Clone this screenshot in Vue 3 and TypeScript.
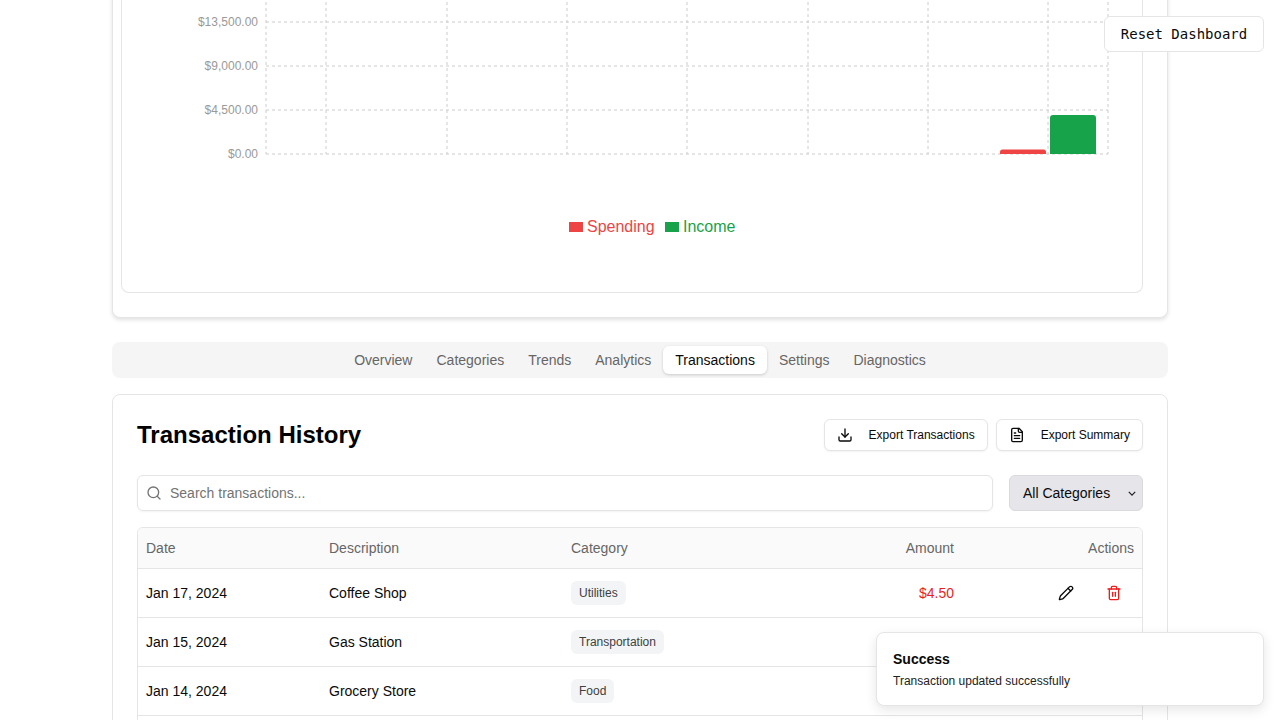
<script setup lang="ts">
interface Row {
  date: string
  description: string
  category: string
  amount?: string
}

const tabs = ['Overview', 'Categories', 'Trends', 'Analytics', 'Transactions', 'Settings', 'Diagnostics']

const rows: Row[] = [
  { date: 'Jan 17, 2024', description: 'Coffee Shop', category: 'Utilities', amount: '$4.50' },
  { date: 'Jan 15, 2024', description: 'Gas Station', category: 'Transportation' },
  { date: 'Jan 14, 2024', description: 'Grocery Store', category: 'Food' },
]

// chart coordinates are page coordinates, the viewBox lines them up
const gridX = [266, 326, 447, 567, 687, 808, 928, 1048, 1108]
const gridY = [22, 66, 110, 154]
const ticks = [
  { y: 22, label: '$13,500.00' },
  { y: 66, label: '$9,000.00' },
  { y: 110, label: '$4,500.00' },
  { y: 154, label: '$0.00' },
]
</script>

<template>
  <div class="viewport">
    <div class="page">
      <section class="chart-card">
        <div class="chart-inner">
          <svg class="chart" width="1020" height="332" viewBox="122 -40 1020 332">
            <line v-for="x in gridX" :key="'x' + x" :x1="x" :x2="x" y1="-40" y2="154" class="grid" />
            <line v-for="y in gridY" :key="'y' + y" x1="266" x2="1108" :y1="y" :y2="y" class="grid" />
            <text v-for="t in ticks" :key="t.label" x="258" :y="t.y + 4" text-anchor="end" class="tick">{{ t.label }}</text>
            <path d="M1000 154v-2a2.5 2.5 0 0 1 2.5-2.500h41a2.500 2.500 0 0 1 2.500 2.500v2z" fill="#ef4444" />
            <path d="M1050 154v-36a3 3 0 0 1 3-3h40a3 3 0 0 1 3 3v36z" fill="#16a34a" />
            <rect x="569" y="222" width="14" height="10" fill="#ef4444" />
            <text x="587" y="232" class="legend" fill="#ef4444">Spending</text>
            <rect x="665" y="222" width="14" height="10" fill="#16a34a" />
            <text x="683" y="232" class="legend" fill="#16a34a">Income</text>
          </svg>
        </div>
      </section>

      <nav class="tabs">
        <button v-for="tab in tabs" :key="tab" class="tab" :class="{ active: tab === 'Transactions' }">{{ tab }}</button>
      </nav>

      <section class="history">
        <header class="history-head">
          <h2>Transaction History</h2>
          <div class="exports">
            <button class="export">
              <svg viewBox="0 0 24 24" class="icon"><path d="M21 15v4a2 2 0 0 1-2 2H5a2 2 0 0 1-2-2v-4" /><polyline points="7 10 12 15 17 10" /><line x1="12" y1="15" x2="12" y2="3" /></svg>
              Export Transactions
            </button>
            <button class="export">
              <svg viewBox="0 0 24 24" class="icon"><path d="M15 2H6a2 2 0 0 0-2 2v16a2 2 0 0 0 2 2h12a2 2 0 0 0 2-2V7Z" /><path d="M14 2v4a2 2 0 0 0 2 2h4" /><path d="M10 9H8" /><path d="M16 13H8" /><path d="M16 17H8" /></svg>
              Export Summary
            </button>
          </div>
        </header>

        <div class="filters">
          <div class="search">
            <svg viewBox="0 0 24 24" class="icon search-icon"><circle cx="11" cy="11" r="8" /><path d="m21 21-4.300-4.300" /></svg>
            <span>Search transactions...</span>
          </div>
          <div class="select">
            <span>All Categories</span>
            <svg viewBox="0 0 10 6" class="chevron"><path d="M1 1l4 4 4-4" /></svg>
          </div>
        </div>

        <div class="table-wrap">
          <table>
            <thead>
              <tr>
                <th class="c-date">Date</th>
                <th class="c-desc">Description</th>
                <th class="c-cat">Category</th>
                <th class="c-amt right">Amount</th>
                <th class="right">Actions</th>
              </tr>
            </thead>
            <tbody>
              <tr v-for="row in rows" :key="row.description">
                <td>{{ row.date }}</td>
                <td>{{ row.description }}</td>
                <td><span class="badge">{{ row.category }}</span></td>
                <td class="right amount">{{ row.amount }}</td>
                <td class="right">
                  <div v-if="row.amount" class="actions">
                    <svg viewBox="0 0 24 24" class="icon"><path d="M21.174 6.812a1 1 0 0 0-3.986-3.987L3.842 16.174a2 2 0 0 0-.5.830l-1.321 4.352a.5.500 0 0 0 .623.622l4.353-1.320a2 2 0 0 0 .830-.497z" /><path d="m15 5 4 4" /></svg>
                    <svg viewBox="0 0 24 24" class="icon trash"><path d="M3 6h18" /><path d="M19 6v14c0 1-1 2-2 2H7c-1 0-2-1-2-2V6" /><path d="M8 6V4c0-1 1-2 2-2h4c1 0 2 1 2 2v2" /><line x1="10" y1="11" x2="10" y2="17" /><line x1="14" y1="11" x2="14" y2="17" /></svg>
                  </div>
                </td>
              </tr>
              <tr><td colspan="5" class="filler"></td></tr>
            </tbody>
          </table>
        </div>
      </section>
    </div>

    <button class="reset">Reset Dashboard</button>

    <div class="toast">
      <div class="toast-title">Success</div>
      <div class="toast-text">Transaction updated successfully</div>
    </div>
  </div>
</template>

<style>
html, body {
  margin: 0;
  background: #fff;
}
</style>

<style scoped>
.viewport {
  position: relative;
  height: 720px;
  overflow: hidden;
  background: #fff;
  font-family: "Liberation Sans", Arial, sans-serif;
  color: #0a0a0a;
}

.page {
  width: 1056px;
  margin: -40px auto 0;
}

.chart-card {
  box-sizing: border-box;
  height: 358px;
  padding: 0 24px 24px 8px;
  background: #fff;
  border: 1px solid #e5e5e5;
  border-top: 0;
  border-radius: 0 0 8px 8px;
  box-shadow: 0 2px 4px rgba(0, 0, 0, 0.12);
}

.chart-inner {
  box-sizing: border-box;
  height: 333px;
  border: 1px solid #e5e5e5;
  border-top: 0;
  border-radius: 0 0 8px 8px;
}

.chart {
  display: block;
}

.grid {
  stroke: #ccc;
  stroke-dasharray: 3 3;
}

.tick {
  font-size: 12px;
  fill: #999;
}

.legend {
  font-size: 16px;
}

.tabs {
  display: flex;
  justify-content: center;
  align-items: center;
  height: 36px;
  margin-top: 24px;
  background: #f5f5f5;
  border-radius: 8px;
}

.tab {
  height: 28px;
  padding: 0 12px;
  border: 0;
  border-radius: 6px;
  background: transparent;
  font: 14px "Liberation Sans", Arial, sans-serif;
  color: #666;
}

.tab.active {
  background: #fff;
  color: #0a0a0a;
  box-shadow: 0 1px 3px rgba(0, 0, 0, 0.18);
}

.history {
  margin-top: 16px;
  padding: 24px;
  background: #fff;
  border: 1px solid #e5e5e5;
  border-radius: 8px;
}

.history-head {
  display: flex;
  justify-content: space-between;
  align-items: center;
  height: 32px;
}

h2 {
  margin: 0;
  font-size: 24px;
  font-weight: 700;
  color: #000;
}

.exports {
  display: flex;
  gap: 8px;
}

.export {
  display: flex;
  align-items: center;
  gap: 16px;
  box-sizing: border-box;
  height: 32px;
  padding: 0 12px;
  background: #fff;
  border: 1px solid #e5e5e5;
  border-radius: 6px;
  box-shadow: 0 1px 2px rgba(0, 0, 0, 0.05);
  font: 12px "Liberation Sans", Arial, sans-serif;
  color: #0a0a0a;
}

.icon {
  flex: none;
  width: 16px;
  height: 16px;
  fill: none;
  stroke: currentColor;
  stroke-width: 2;
  stroke-linecap: round;
  stroke-linejoin: round;
}

.filters {
  display: flex;
  gap: 16px;
  margin-top: 24px;
}

.search {
  flex: 1;
  display: flex;
  align-items: center;
  gap: 8px;
  box-sizing: border-box;
  height: 36px;
  padding: 0 8px;
  border: 1px solid #e5e5e5;
  border-radius: 6px;
  box-shadow: 0 1px 2px rgba(0, 0, 0, 0.05);
  font-size: 14px;
  color: #737373;
}

.search-icon {
  color: #737373;
}

.select {
  display: flex;
  align-items: center;
  justify-content: space-between;
  box-sizing: border-box;
  width: 134px;
  height: 36px;
  padding: 0 6px 0 13px;
  background: #e5e5ea;
  border: 1px solid #d9d9de;
  border-radius: 6px;
  font-size: 14px;
  color: #0a0a0a;
}

.chevron {
  width: 8px;
  height: 5px;
  fill: none;
  stroke: #222;
  stroke-width: 1.500;
}

.table-wrap {
  margin-top: 16px;
  border: 1px solid #e5e5e5;
  border-radius: 6px;
  overflow: hidden;
}

table {
  width: 100%;
  border-collapse: collapse;
  table-layout: fixed;
  font-size: 14px;
}

th {
  height: 40px;
  padding: 0 8px;
  background: #fafafa;
  font-weight: 400;
  text-align: left;
  color: #666;
  border-bottom: 1px solid #e5e5e5;
}

td {
  height: 48px;
  padding: 0 8px;
  border-bottom: 1px solid #e5e5e5;
}

.c-date {
  width: 167px;
}

.c-desc {
  width: 226px;
}

.c-cat {
  width: 200px;
}

.c-amt {
  width: 167px;
}

.right {
  text-align: right;
}

.amount {
  color: #ef1c1c;
}

.badge {
  display: inline-block;
  padding: 0 8px;
  line-height: 24px;
  background: #f3f4f6;
  border-radius: 6px;
  font-size: 12px;
  color: #404040;
}

.actions {
  display: flex;
  justify-content: flex-end;
  gap: 32px;
  padding-right: 12px;
}

.trash {
  color: #ef1c1c;
}

.filler {
  height: 48px;
}

.reset {
  position: absolute;
  top: 16px;
  right: 16px;
  box-sizing: border-box;
  width: 160px;
  height: 36px;
  background: #fff;
  border: 1px solid #e5e5e5;
  border-radius: 6px;
  font: 14px "DejaVu Sans Mono", monospace;
  color: #0a0a0a;
}

.toast {
  position: absolute;
  top: 632px;
  right: 16px;
  box-sizing: border-box;
  width: 388px;
  height: 74px;
  padding: 16px;
  background: #fff;
  border: 1px solid #e5e5e5;
  border-radius: 8px;
  box-shadow: 0 4px 12px rgba(0, 0, 0, 0.1);
}

.toast-title {
  font-size: 14px;
  font-weight: 700;
  line-height: 20px;
}

.toast-text {
  margin-top: 2px;
  font-size: 12px;
  line-height: 20px;
  color: #222;
}
</style>
